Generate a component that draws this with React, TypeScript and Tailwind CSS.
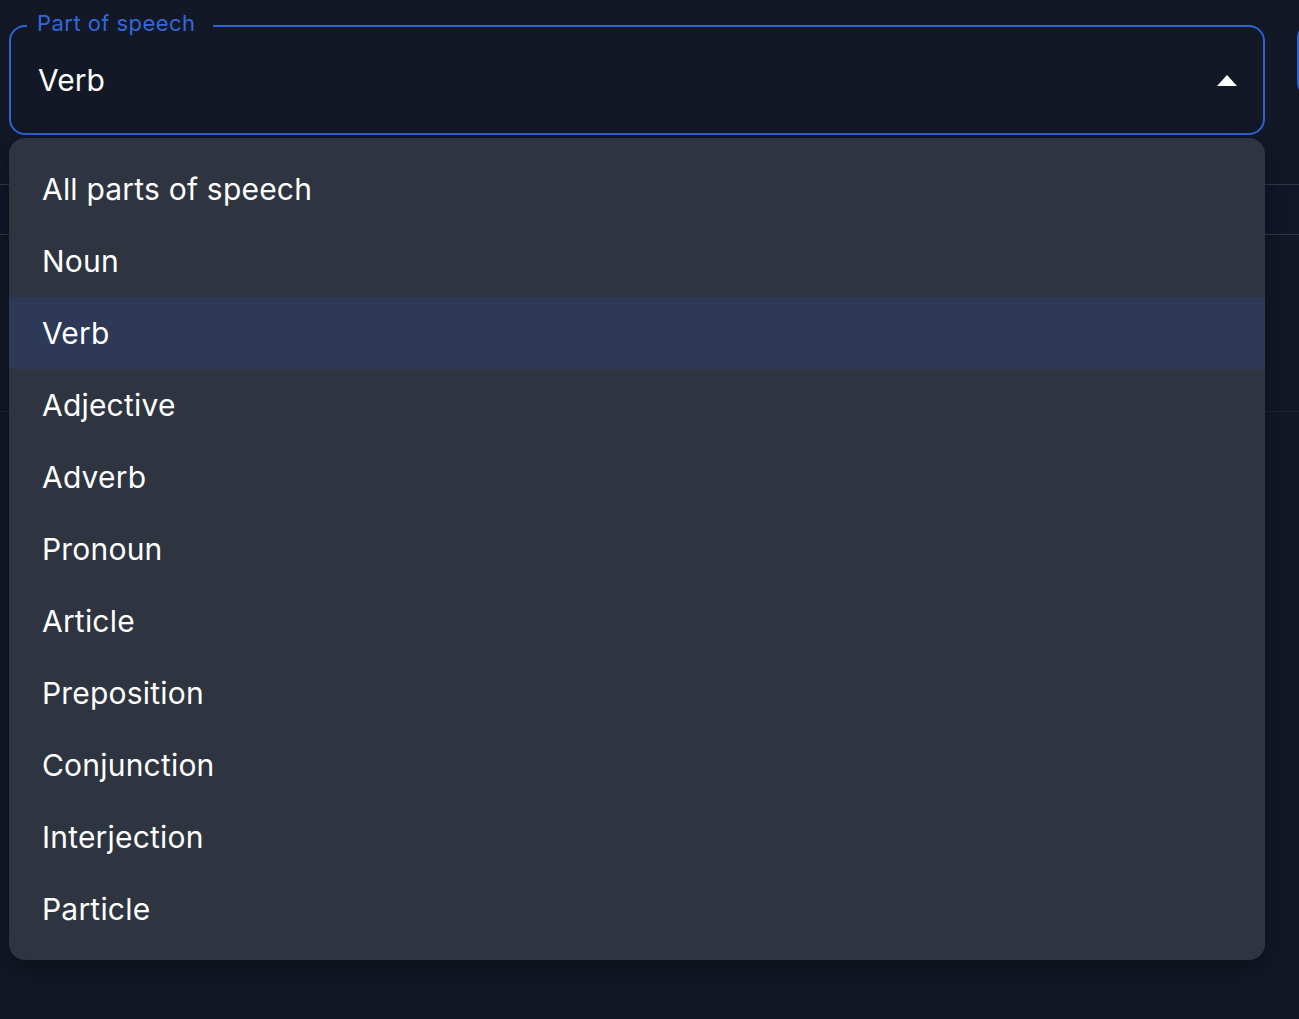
import React from "react";

const items = [
  "All parts of speech",
  "Noun",
  "Verb",
  "Adjective",
  "Adverb",
  "Pronoun",
  "Article",
  "Preposition",
  "Conjunction",
  "Interjection",
  "Particle",
];

export default function App() {
  return (
    <div
      className="relative w-[1299px] h-[1019px] overflow-hidden bg-[#121826] text-white flex flex-col"
      style={{ fontFamily: "Inter, 'Noto Sans', sans-serif" }}
    >
      {/* toolbar row */}
      <div className="flex items-start pt-[25px] pl-[9px] gap-[32px]">
        {/* select field */}
        <div className="relative shrink-0 w-[1256px] h-[110px] rounded-[16px] border-2 border-[#2f63d4] bg-[#131826]">
          <span className="absolute left-[16px] top-[-17px] pl-[10px] pr-[17px] bg-[#121826] text-[22px] leading-[26px] text-[#3468d8] tracking-[0.45px]">
            Part of speech
          </span>
          <div className="flex items-center h-full pl-[27px] pr-[26px] justify-between">
            <span className="text-[30px] leading-none text-white">Verb</span>
            <svg width="20" height="11" viewBox="0 0 20 11">
              <path d="M0 11 L10 0 L20 11 Z" fill="white" />
            </svg>
          </div>

          {/* dropdown menu (overlay) */}
          <div className="absolute left-[-2px] top-[111px] w-[1256px] rounded-[16px] bg-[#2e3440] py-[15px] shadow-[0_8px_24px_rgba(0,0,0,0.35)] overflow-hidden z-10">
            {items.map((it) => (
              <div
                key={it}
                className={
                  "h-[72px] flex items-center pl-[33px] text-[30px] tracking-[0.2px] text-white " +
                  (it === "Verb" ? "bg-[#2d3957]" : "")
                }
              >
                {it}
              </div>
            ))}
          </div>
        </div>
        <div className="shrink-0 w-[40px] h-[70px] rounded-[12px] bg-[#2f63d4]" />
      </div>

      {/* table behind the menu */}
      <div className="mt-[49px] h-[51px] border-y border-[#323846] bg-[#111729]" />
      <div className="h-[177px] border-b border-[#1c2433]" />
    </div>
  );
}
